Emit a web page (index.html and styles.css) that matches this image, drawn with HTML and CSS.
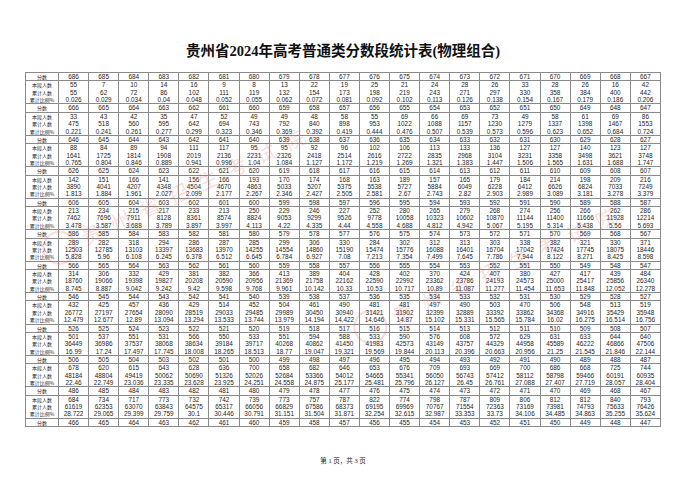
FILE: index.html
```html
<!DOCTYPE html>
<html lang="zh-CN">
<head>
<meta charset="utf-8">
<title>贵州省2024年高考普通类分数段统计表(物理组合)</title>
<link rel="stylesheet" href="styles.css">
</head>
<body>
<div class="page">
<h1 class="title">贵州省2024年高考普通类分数段统计表(物理组合)</h1>
<table class="grid">
<colgroup><col class="c-lbl"><col span="20"></colgroup>
<tbody>
<tr class="score"><td class="lbl">分数</td><td>686</td><td>685</td><td>684</td><td>683</td><td>682</td><td>681</td><td>680</td><td>679</td><td>678</td><td>677</td><td>676</td><td>675</td><td>674</td><td>673</td><td>672</td><td>671</td><td>670</td><td>669</td><td>668</td><td>667</td></tr>
<tr class="data"><td class="lbl">本段人数<br>累计人数<br>累计比例%</td><td>55<br>55<br>0.026</td><td>7<br>62<br>0.029</td><td>10<br>72<br>0.034</td><td>14<br>86<br>0.04</td><td>16<br>102<br>0.048</td><td>9<br>111<br>0.052</td><td>8<br>119<br>0.055</td><td>13<br>132<br>0.062</td><td>22<br>154<br>0.072</td><td>19<br>173<br>0.081</td><td>25<br>198<br>0.092</td><td>21<br>219<br>0.102</td><td>24<br>243<br>0.113</td><td>28<br>271<br>0.126</td><td>26<br>297<br>0.138</td><td>33<br>330<br>0.154</td><td>28<br>358<br>0.167</td><td>26<br>384<br>0.179</td><td>16<br>400<br>0.186</td><td>42<br>442<br>0.206</td></tr>
<tr class="score"><td class="lbl">分数</td><td>666</td><td>665</td><td>664</td><td>663</td><td>662</td><td>661</td><td>660</td><td>659</td><td>658</td><td>657</td><td>656</td><td>655</td><td>654</td><td>653</td><td>652</td><td>651</td><td>650</td><td>649</td><td>648</td><td>647</td></tr>
<tr class="data"><td class="lbl">本段人数<br>累计人数<br>累计比例%</td><td>33<br>475<br>0.221</td><td>43<br>518<br>0.241</td><td>42<br>560<br>0.261</td><td>35<br>595<br>0.277</td><td>47<br>642<br>0.299</td><td>52<br>694<br>0.323</td><td>49<br>743<br>0.346</td><td>49<br>792<br>0.369</td><td>48<br>840<br>0.392</td><td>58<br>898<br>0.419</td><td>55<br>953<br>0.444</td><td>69<br>1022<br>0.476</td><td>66<br>1088<br>0.507</td><td>69<br>1157<br>0.539</td><td>73<br>1230<br>0.573</td><td>49<br>1279<br>0.596</td><td>58<br>1337<br>0.623</td><td>61<br>1398<br>0.652</td><td>69<br>1467<br>0.684</td><td>86<br>1553<br>0.724</td></tr>
<tr class="score"><td class="lbl">分数</td><td>646</td><td>645</td><td>644</td><td>643</td><td>642</td><td>641</td><td>640</td><td>639</td><td>638</td><td>637</td><td>636</td><td>635</td><td>634</td><td>633</td><td>632</td><td>631</td><td>630</td><td>629</td><td>628</td><td>627</td></tr>
<tr class="data"><td class="lbl">本段人数<br>累计人数<br>累计比例%</td><td>88<br>1641<br>0.765</td><td>84<br>1725<br>0.804</td><td>89<br>1814<br>0.846</td><td>94<br>1908<br>0.889</td><td>111<br>2019<br>0.941</td><td>117<br>2136<br>0.996</td><td>95<br>2231<br>1.04</td><td>95<br>2326<br>1.084</td><td>92<br>2418<br>1.127</td><td>96<br>2514<br>1.172</td><td>102<br>2616<br>1.219</td><td>106<br>2722<br>1.269</td><td>113<br>2835<br>1.321</td><td>133<br>2968<br>1.383</td><td>136<br>3104<br>1.447</td><td>127<br>3231<br>1.506</td><td>127<br>3358<br>1.565</td><td>140<br>3498<br>1.631</td><td>123<br>3621<br>1.688</td><td>127<br>3748<br>1.747</td></tr>
<tr class="score"><td class="lbl">分数</td><td>626</td><td>625</td><td>624</td><td>623</td><td>622</td><td>621</td><td>620</td><td>619</td><td>618</td><td>617</td><td>616</td><td>615</td><td>614</td><td>613</td><td>612</td><td>611</td><td>610</td><td>609</td><td>608</td><td>607</td></tr>
<tr class="data"><td class="lbl">本段人数<br>累计人数<br>累计比例%</td><td>142<br>3890<br>1.813</td><td>151<br>4041<br>1.884</td><td>166<br>4207<br>1.961</td><td>141<br>4348<br>2.027</td><td>156<br>4504<br>2.099</td><td>166<br>4670<br>2.177</td><td>193<br>4863<br>2.267</td><td>170<br>5033<br>2.346</td><td>174<br>5207<br>2.427</td><td>168<br>5375<br>2.505</td><td>163<br>5538<br>2.581</td><td>189<br>5727<br>2.67</td><td>157<br>5884<br>2.743</td><td>165<br>6049<br>2.82</td><td>179<br>6228<br>2.903</td><td>184<br>6412<br>2.989</td><td>214<br>6626<br>3.089</td><td>198<br>6824<br>3.181</td><td>209<br>7033<br>3.278</td><td>216<br>7249<br>3.379</td></tr>
<tr class="score"><td class="lbl">分数</td><td>606</td><td>605</td><td>604</td><td>603</td><td>602</td><td>601</td><td>600</td><td>599</td><td>598</td><td>597</td><td>596</td><td>595</td><td>594</td><td>593</td><td>592</td><td>591</td><td>590</td><td>589</td><td>588</td><td>587</td></tr>
<tr class="data"><td class="lbl">本段人数<br>累计人数<br>累计比例%</td><td>213<br>7462<br>3.478</td><td>234<br>7696<br>3.587</td><td>215<br>7911<br>3.688</td><td>217<br>8128<br>3.789</td><td>233<br>8361<br>3.897</td><td>213<br>8574<br>3.997</td><td>250<br>8824<br>4.113</td><td>229<br>9053<br>4.22</td><td>246<br>9299<br>4.335</td><td>227<br>9526<br>4.44</td><td>252<br>9778<br>4.558</td><td>280<br>10058<br>4.688</td><td>265<br>10323<br>4.812</td><td>279<br>10602<br>4.942</td><td>268<br>10870<br>5.067</td><td>274<br>11144<br>5.195</td><td>256<br>11400<br>5.314</td><td>266<br>11666<br>5.438</td><td>262<br>11928<br>5.56</td><td>286<br>12214<br>5.693</td></tr>
<tr class="score"><td class="lbl">分数</td><td>586</td><td>585</td><td>584</td><td>583</td><td>582</td><td>581</td><td>580</td><td>579</td><td>578</td><td>577</td><td>576</td><td>575</td><td>574</td><td>573</td><td>572</td><td>571</td><td>570</td><td>569</td><td>568</td><td>567</td></tr>
<tr class="data"><td class="lbl">本段人数<br>累计人数<br>累计比例%</td><td>289<br>12503<br>5.828</td><td>282<br>12785<br>5.96</td><td>318<br>13103<br>6.108</td><td>294<br>13397<br>6.245</td><td>286<br>13683<br>6.378</td><td>287<br>13970<br>6.512</td><td>285<br>14255<br>6.645</td><td>299<br>14554<br>6.784</td><td>306<br>14860<br>6.927</td><td>330<br>15190<br>7.08</td><td>284<br>15474<br>7.213</td><td>302<br>15776<br>7.354</td><td>312<br>16088<br>7.499</td><td>313<br>16401<br>7.645</td><td>303<br>16704<br>7.786</td><td>338<br>17042<br>7.944</td><td>382<br>17424<br>8.122</td><td>321<br>17745<br>8.271</td><td>330<br>18075<br>8.425</td><td>371<br>18446<br>8.598</td></tr>
<tr class="score"><td class="lbl">分数</td><td>566</td><td>565</td><td>564</td><td>563</td><td>562</td><td>561</td><td>560</td><td>559</td><td>558</td><td>557</td><td>556</td><td>555</td><td>554</td><td>553</td><td>552</td><td>551</td><td>550</td><td>549</td><td>548</td><td>547</td></tr>
<tr class="data"><td class="lbl">本段人数<br>累计人数<br>累计比例%</td><td>314<br>18760<br>8.745</td><td>306<br>19066<br>8.887</td><td>332<br>19398<br>9.042</td><td>429<br>19827<br>9.242</td><td>381<br>20208<br>9.42</td><td>382<br>20590<br>9.598</td><td>366<br>20956<br>9.768</td><td>413<br>21369<br>9.961</td><td>389<br>21758<br>10.142</td><td>404<br>22162<br>10.33</td><td>428<br>22590<br>10.53</td><td>402<br>22992<br>10.717</td><td>370<br>23362<br>10.89</td><td>424<br>23786<br>11.087</td><td>407<br>24193<br>11.277</td><td>380<br>24573<br>11.454</td><td>427<br>25000<br>11.653</td><td>417<br>25417<br>11.848</td><td>439<br>25856<br>12.052</td><td>484<br>26340<br>12.278</td></tr>
<tr class="score"><td class="lbl">分数</td><td>546</td><td>545</td><td>544</td><td>543</td><td>542</td><td>541</td><td>540</td><td>539</td><td>538</td><td>537</td><td>536</td><td>535</td><td>534</td><td>533</td><td>532</td><td>531</td><td>530</td><td>529</td><td>528</td><td>527</td></tr>
<tr class="data"><td class="lbl">本段人数<br>累计人数<br>累计比例%</td><td>432<br>26772<br>12.479</td><td>425<br>27197<br>12.677</td><td>457<br>27654<br>12.89</td><td>436<br>28090<br>13.094</td><td>429<br>28519<br>13.294</td><td>514<br>29033<br>13.533</td><td>452<br>29485<br>13.744</td><td>504<br>29989<br>13.979</td><td>461<br>30450<br>14.194</td><td>490<br>30940<br>14.422</td><td>481<br>31421<br>14.646</td><td>481<br>31902<br>14.87</td><td>497<br>32399<br>15.102</td><td>490<br>32889<br>15.331</td><td>503<br>33392<br>15.565</td><td>470<br>33862<br>15.784</td><td>506<br>34368<br>16.02</td><td>548<br>34916<br>16.275</td><td>513<br>35429<br>16.514</td><td>519<br>35948<br>16.756</td></tr>
<tr class="score"><td class="lbl">分数</td><td>526</td><td>525</td><td>524</td><td>523</td><td>522</td><td>521</td><td>520</td><td>519</td><td>518</td><td>517</td><td>516</td><td>515</td><td>514</td><td>513</td><td>512</td><td>511</td><td>510</td><td>509</td><td>508</td><td>507</td></tr>
<tr class="data"><td class="lbl">本段人数<br>累计人数<br>累计比例%</td><td>501<br>36449<br>16.99</td><td>537<br>36986<br>17.24</td><td>551<br>37537<br>17.497</td><td>531<br>38068<br>17.745</td><td>566<br>38634<br>18.008</td><td>550<br>39184<br>18.265</td><td>533<br>39717<br>18.513</td><td>551<br>40268<br>18.77</td><td>594<br>40862<br>19.047</td><td>588<br>41450<br>19.321</td><td>533<br>41983<br>19.569</td><td>590<br>42573<br>19.844</td><td>576<br>43149<br>20.113</td><td>608<br>43757<br>20.396</td><td>572<br>44329<br>20.663</td><td>629<br>44958<br>20.956</td><td>631<br>45589<br>21.25</td><td>633<br>46222<br>21.545</td><td>644<br>46866<br>21.846</td><td>640<br>47506<br>22.144</td></tr>
<tr class="score"><td class="lbl">分数</td><td>506</td><td>505</td><td>504</td><td>503</td><td>502</td><td>501</td><td>500</td><td>499</td><td>498</td><td>497</td><td>496</td><td>495</td><td>494</td><td>493</td><td>492</td><td>491</td><td>490</td><td>489</td><td>488</td><td>487</td></tr>
<tr class="data"><td class="lbl">本段人数<br>累计人数<br>累计比例%</td><td>678<br>48184<br>22.46</td><td>620<br>48804<br>22.749</td><td>615<br>49419<br>23.036</td><td>643<br>50062<br>23.335</td><td>628<br>50690<br>23.628</td><td>636<br>51326<br>23.925</td><td>700<br>52026<br>24.251</td><td>658<br>52684<br>24.558</td><td>682<br>53366<br>24.875</td><td>646<br>54012<br>25.177</td><td>653<br>54665<br>25.481</td><td>676<br>55341<br>25.796</td><td>709<br>56050<br>26.127</td><td>693<br>56743<br>26.45</td><td>669<br>57412<br>26.761</td><td>700<br>58112<br>27.088</td><td>686<br>58798<br>27.407</td><td>668<br>59466<br>27.719</td><td>725<br>60191<br>28.057</td><td>744<br>60935<br>28.404</td></tr>
<tr class="score"><td class="lbl">分数</td><td>486</td><td>485</td><td>484</td><td>483</td><td>482</td><td>481</td><td>480</td><td>479</td><td>478</td><td>477</td><td>476</td><td>475</td><td>474</td><td>473</td><td>472</td><td>471</td><td>470</td><td>469</td><td>468</td><td>467</td></tr>
<tr class="data"><td class="lbl">本段人数<br>累计人数<br>累计比例%</td><td>684<br>61619<br>28.722</td><td>734<br>62353<br>29.065</td><td>717<br>63070<br>29.399</td><td>773<br>63843<br>29.759</td><td>732<br>64575<br>30.1</td><td>742<br>65317<br>30.446</td><td>739<br>66056<br>30.791</td><td>773<br>66829<br>31.151</td><td>757<br>67586<br>31.504</td><td>787<br>68373<br>31.871</td><td>822<br>69195<br>32.254</td><td>774<br>69969<br>32.615</td><td>798<br>70767<br>32.987</td><td>787<br>71554<br>33.353</td><td>809<br>72363<br>33.73</td><td>806<br>73169<br>34.106</td><td>812<br>73981<br>34.485</td><td>812<br>74793<br>34.863</td><td>840<br>75633<br>35.255</td><td>793<br>76426<br>35.624</td></tr>
<tr class="score"><td class="lbl">分数</td><td>466</td><td>465</td><td>464</td><td>463</td><td>462</td><td>461</td><td>460</td><td>459</td><td>458</td><td>457</td><td>456</td><td>455</td><td>454</td><td>453</td><td>452</td><td>451</td><td>450</td><td>449</td><td>448</td><td>447</td></tr>
</tbody>
</table>
<p class="footer">第 1 页，共 3 页</p>
<div class="wm wm-a" aria-hidden="true"><span class="seal"></span><span class="wm-text">贵州省招生考试院</span></div>
<div class="wm wm-b" aria-hidden="true"><span class="seal"></span><span class="wm-text">贵州省招生考试院</span></div>
</div>
</body>
</html>
```
FILE: styles.css
```css
html, body {
  margin: 0;
  padding: 0;
  background: #ffffff;
}

.page {
  position: relative;
  width: 680px;
  height: 481px;
  overflow: hidden;
  padding: 43px 0 0 25px;
  box-sizing: border-box;
  color: #1a1a1a;
}

.title {
  width: 636px;
  margin: 0 0 13px 0;
  font-family: "Liberation Serif", "Noto Sans CJK SC", serif;
  font-weight: bold;
  font-size: 14.5px;
  line-height: 16px;
  text-align: center;
  color: #111111;
}

.grid {
  width: 636px;
  border-collapse: collapse;
  table-layout: fixed;
}

.c-lbl {
  width: 33px;
}

.grid td {
  padding: 0;
  border: 1px solid #8a8a8a;
  text-align: center;
  vertical-align: middle;
  font-family: "Liberation Sans", Arial, sans-serif;
  font-size: 6.4px;
  line-height: 7.36px;
  white-space: nowrap;
  overflow: hidden;
  color: #1e1e1e;
}

.grid td.lbl {
  font-family: "Noto Sans CJK SC", sans-serif;
  font-size: 5px;
}

.footer {
  width: 636px;
  margin: 30px 0 0 0;
  text-align: center;
  font-family: "Liberation Serif", "Noto Sans CJK SC", serif;
  font-size: 6.5px;
  line-height: 8px;
  color: #222222;
}

.wm {
  position: absolute;
  display: flex;
  align-items: center;
  gap: 8px;
  height: 34px;
  transform: rotate(-25deg);
  transform-origin: 0 50%;
  pointer-events: none;
  color: rgba(228, 70, 70, 0.2);
}

.wm-a {
  left: 44px;
  top: 238px;
}

.wm-b {
  left: 355px;
  top: 317px;
}

.seal {
  width: 30px;
  height: 30px;
  border: 2px solid rgba(228, 70, 70, 0.2);
  border-radius: 50%;
  flex: none;
}

.wm-text {
  font-family: "Noto Sans CJK SC", sans-serif;
  font-size: 20px;
  letter-spacing: 12px;
  white-space: nowrap;
}
```
